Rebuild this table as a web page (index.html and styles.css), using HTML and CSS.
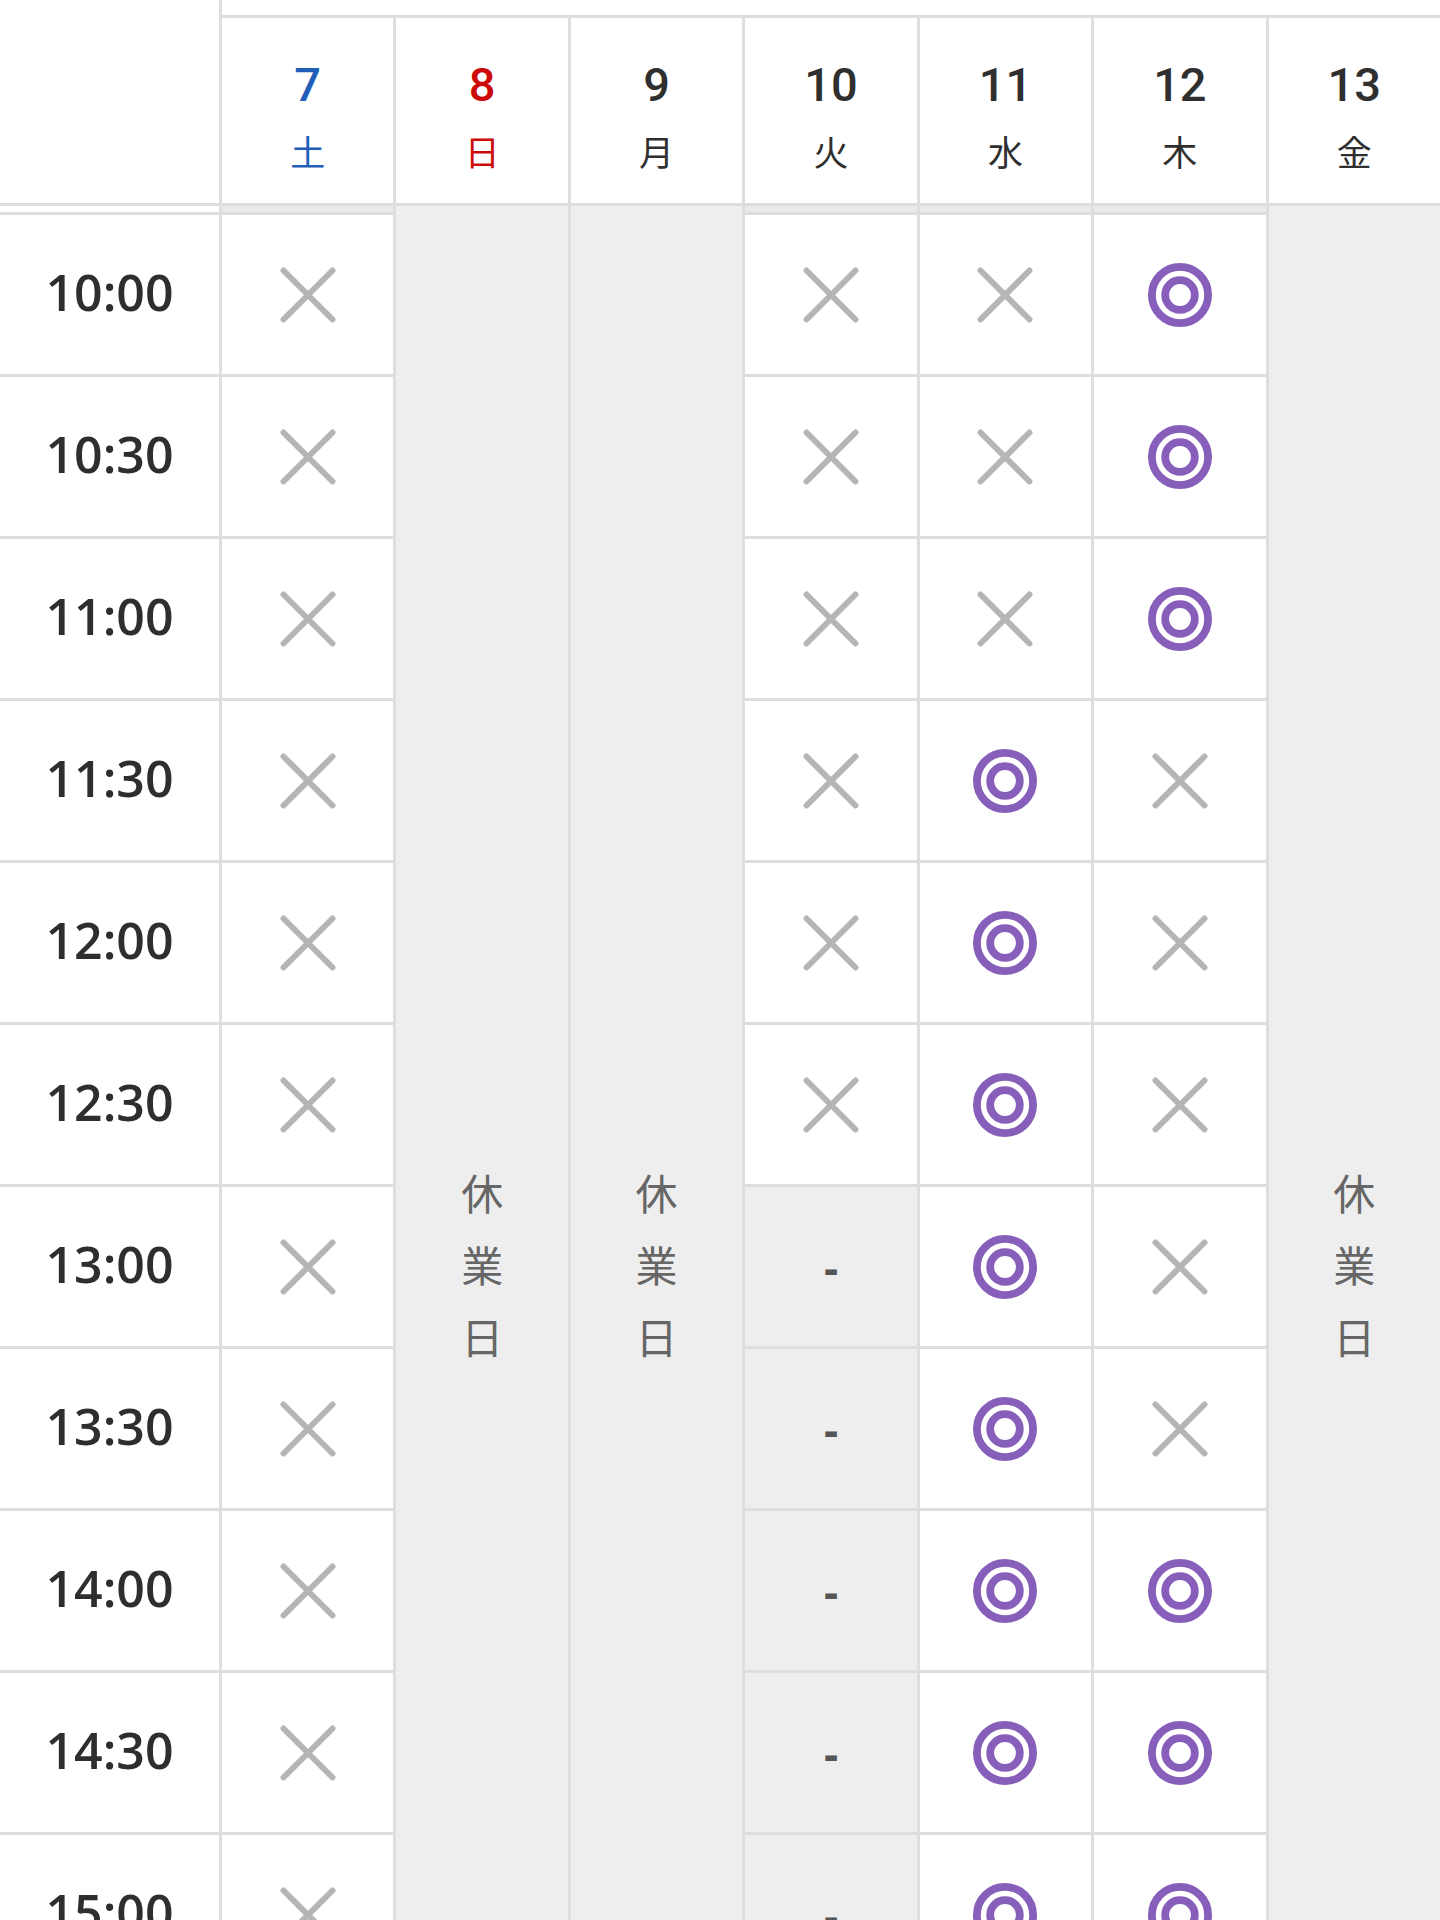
FILE: index.html
```html
<!DOCTYPE html>
<html lang="ja">
<head>
<meta charset="utf-8">
<title>予約状況</title>
<link rel="stylesheet" href="styles.css">
</head>
<body>
<svg class="defs" aria-hidden="true">
  <symbol id="ng" viewBox="0 0 56 56">
    <path d="M3.5 3.5 L52.5 52.5 M52.5 3.5 L3.5 52.5" fill="none" stroke="#b5b5b5" stroke-width="6" stroke-linecap="round"/>
  </symbol>
  <symbol id="ok" viewBox="0 0 64 64">
    <circle cx="32" cy="32" r="28.1" fill="none" stroke="#875fba" stroke-width="7.8"/>
    <circle cx="32" cy="32" r="14.8" fill="none" stroke="#875fba" stroke-width="7.8"/>
  </symbol>
</svg>
<div class="schedule">
  <div class="head">
    <div class="corner"></div>
    <div class="strip"></div>
    <div class="day sat"><span class="num">7</span><span class="wd">土</span></div>
    <div class="day sun"><span class="num">8</span><span class="wd">日</span></div>
    <div class="day"><span class="num">9</span><span class="wd">月</span></div>
    <div class="day"><span class="num">10</span><span class="wd">火</span></div>
    <div class="day"><span class="num">11</span><span class="wd">水</span></div>
    <div class="day"><span class="num">12</span><span class="wd">木</span></div>
    <div class="day"><span class="num">13</span><span class="wd">金</span></div>
  </div>
  <div class="grid">
    <div class="closed c8"><p class="closed-label">休<br>業<br>日</p></div>
    <div class="closed c9"><p class="closed-label">休<br>業<br>日</p></div>
    <div class="closed c13"><p class="closed-label">休<br>業<br>日</p></div>

    <div class="sp sp-time"></div><div class="sp"></div><div class="sp"></div><div class="sp"></div><div class="sp"></div>

    <div class="time">10:00</div>
    <div class="cell"><svg class="x"><use href="#ng"/></svg></div>
    <div class="cell"><svg class="x"><use href="#ng"/></svg></div>
    <div class="cell"><svg class="x"><use href="#ng"/></svg></div>
    <div class="cell"><svg class="o"><use href="#ok"/></svg></div>

    <div class="time">10:30</div>
    <div class="cell"><svg class="x"><use href="#ng"/></svg></div>
    <div class="cell"><svg class="x"><use href="#ng"/></svg></div>
    <div class="cell"><svg class="x"><use href="#ng"/></svg></div>
    <div class="cell"><svg class="o"><use href="#ok"/></svg></div>

    <div class="time">11:00</div>
    <div class="cell"><svg class="x"><use href="#ng"/></svg></div>
    <div class="cell"><svg class="x"><use href="#ng"/></svg></div>
    <div class="cell"><svg class="x"><use href="#ng"/></svg></div>
    <div class="cell"><svg class="o"><use href="#ok"/></svg></div>

    <div class="time">11:30</div>
    <div class="cell"><svg class="x"><use href="#ng"/></svg></div>
    <div class="cell"><svg class="x"><use href="#ng"/></svg></div>
    <div class="cell"><svg class="o"><use href="#ok"/></svg></div>
    <div class="cell"><svg class="x"><use href="#ng"/></svg></div>

    <div class="time">12:00</div>
    <div class="cell"><svg class="x"><use href="#ng"/></svg></div>
    <div class="cell"><svg class="x"><use href="#ng"/></svg></div>
    <div class="cell"><svg class="o"><use href="#ok"/></svg></div>
    <div class="cell"><svg class="x"><use href="#ng"/></svg></div>

    <div class="time">12:30</div>
    <div class="cell"><svg class="x"><use href="#ng"/></svg></div>
    <div class="cell"><svg class="x"><use href="#ng"/></svg></div>
    <div class="cell"><svg class="o"><use href="#ok"/></svg></div>
    <div class="cell"><svg class="x"><use href="#ng"/></svg></div>

    <div class="time">13:00</div>
    <div class="cell"><svg class="x"><use href="#ng"/></svg></div>
    <div class="cell none"><span class="dash">-</span></div>
    <div class="cell"><svg class="o"><use href="#ok"/></svg></div>
    <div class="cell"><svg class="x"><use href="#ng"/></svg></div>

    <div class="time">13:30</div>
    <div class="cell"><svg class="x"><use href="#ng"/></svg></div>
    <div class="cell none"><span class="dash">-</span></div>
    <div class="cell"><svg class="o"><use href="#ok"/></svg></div>
    <div class="cell"><svg class="x"><use href="#ng"/></svg></div>

    <div class="time">14:00</div>
    <div class="cell"><svg class="x"><use href="#ng"/></svg></div>
    <div class="cell none"><span class="dash">-</span></div>
    <div class="cell"><svg class="o"><use href="#ok"/></svg></div>
    <div class="cell"><svg class="o"><use href="#ok"/></svg></div>

    <div class="time">14:30</div>
    <div class="cell"><svg class="x"><use href="#ng"/></svg></div>
    <div class="cell none"><span class="dash">-</span></div>
    <div class="cell"><svg class="o"><use href="#ok"/></svg></div>
    <div class="cell"><svg class="o"><use href="#ok"/></svg></div>

    <div class="time">15:00</div>
    <div class="cell"><svg class="x"><use href="#ng"/></svg></div>
    <div class="cell none"><span class="dash">-</span></div>
    <div class="cell"><svg class="o"><use href="#ok"/></svg></div>
    <div class="cell"><svg class="o"><use href="#ok"/></svg></div>

    <div class="time">15:30</div>
    <div class="cell"><svg class="x"><use href="#ng"/></svg></div>
    <div class="cell none"><span class="dash">-</span></div>
    <div class="cell"><svg class="o"><use href="#ok"/></svg></div>
    <div class="cell"><svg class="o"><use href="#ok"/></svg></div>

    <div class="time">16:00</div>
    <div class="cell"><svg class="x"><use href="#ng"/></svg></div>
    <div class="cell none"><span class="dash">-</span></div>
    <div class="cell"><svg class="o"><use href="#ok"/></svg></div>
    <div class="cell"><svg class="o"><use href="#ok"/></svg></div>
  </div>
</div>
</body>
</html>
```
FILE: styles.css
```css
html, body {
  margin: 0;
  padding: 0;
  background: #ffffff;
}

.defs {
  position: absolute;
  width: 0;
  height: 0;
  overflow: hidden;
}

.schedule {
  width: 1440px;
  height: 1920px;
  overflow: hidden;
  background: #ffffff;
}

/* ---------- header ---------- */
.head {
  display: grid;
  grid-template-columns: 219px repeat(7, 1fr);
  grid-template-rows: 15px 185px;
  gap: 3px;
  padding-bottom: 3px;
  background: #dedede;
}

.corner {
  grid-column: 1;
  grid-row: 1 / 3;
  background: #ffffff;
}

.strip {
  grid-column: 2 / 9;
  grid-row: 1;
  background: #ffffff;
}

.day {
  background: #ffffff;
  display: flex;
  flex-direction: column;
  align-items: center;
  color: #2f2f2f;
}

.num {
  font-family: Roboto, "Liberation Sans", sans-serif;
  font-weight: 500;
  font-size: 47px;
  line-height: 50px;
  margin-top: 42px;
}

.wd {
  font-family: "Noto Sans CJK JP", "Noto Sans", sans-serif;
  font-weight: 400;
  font-size: 35px;
  line-height: 40px;
  margin-top: 21px;
}

.day.sat { color: #1f5fba; }
.day.sun { color: #cc0a0a; }

/* ---------- body ---------- */
.grid {
  display: grid;
  grid-template-columns: 219px repeat(7, 1fr);
  grid-template-rows: 6px repeat(13, 159px);
  gap: 3px;
  background: #dedede;
}

.sp {
  background: #e9e9e9;
}

.sp-time {
  background: #ffffff;
}

.closed {
  grid-row: 1 / -1;
  background: #eeeeee;
  display: flex;
  align-items: center;
  justify-content: center;
}

.c8 { grid-column: 3; }
.c9 { grid-column: 4; }
.c13 { grid-column: 8; }

.closed-label {
  margin: 4px 0 0;
  font-family: "Noto Sans CJK JP", "Noto Sans", sans-serif;
  font-weight: 400;
  font-size: 42px;
  line-height: 72px;
  color: #666666;
  text-align: center;
}

.time {
  background: #ffffff;
  display: flex;
  align-items: center;
  justify-content: center;
  padding-bottom: 6px;
  font-family: "Open Sans", "Liberation Sans", sans-serif;
  font-weight: 600;
  font-size: 50px;
  color: #2e2e2e;
}

.cell {
  background: #ffffff;
  display: flex;
  align-items: center;
  justify-content: center;
}

.cell.none {
  background: #eeeeee;
}

.x {
  width: 56px;
  height: 56px;
}

.o {
  width: 64px;
  height: 64px;
}

.dash {
  font-family: "Open Sans", "Liberation Sans", sans-serif;
  font-weight: 700;
  font-size: 44px;
  line-height: 1;
  color: #555555;
  margin-top: 0;
}
```
